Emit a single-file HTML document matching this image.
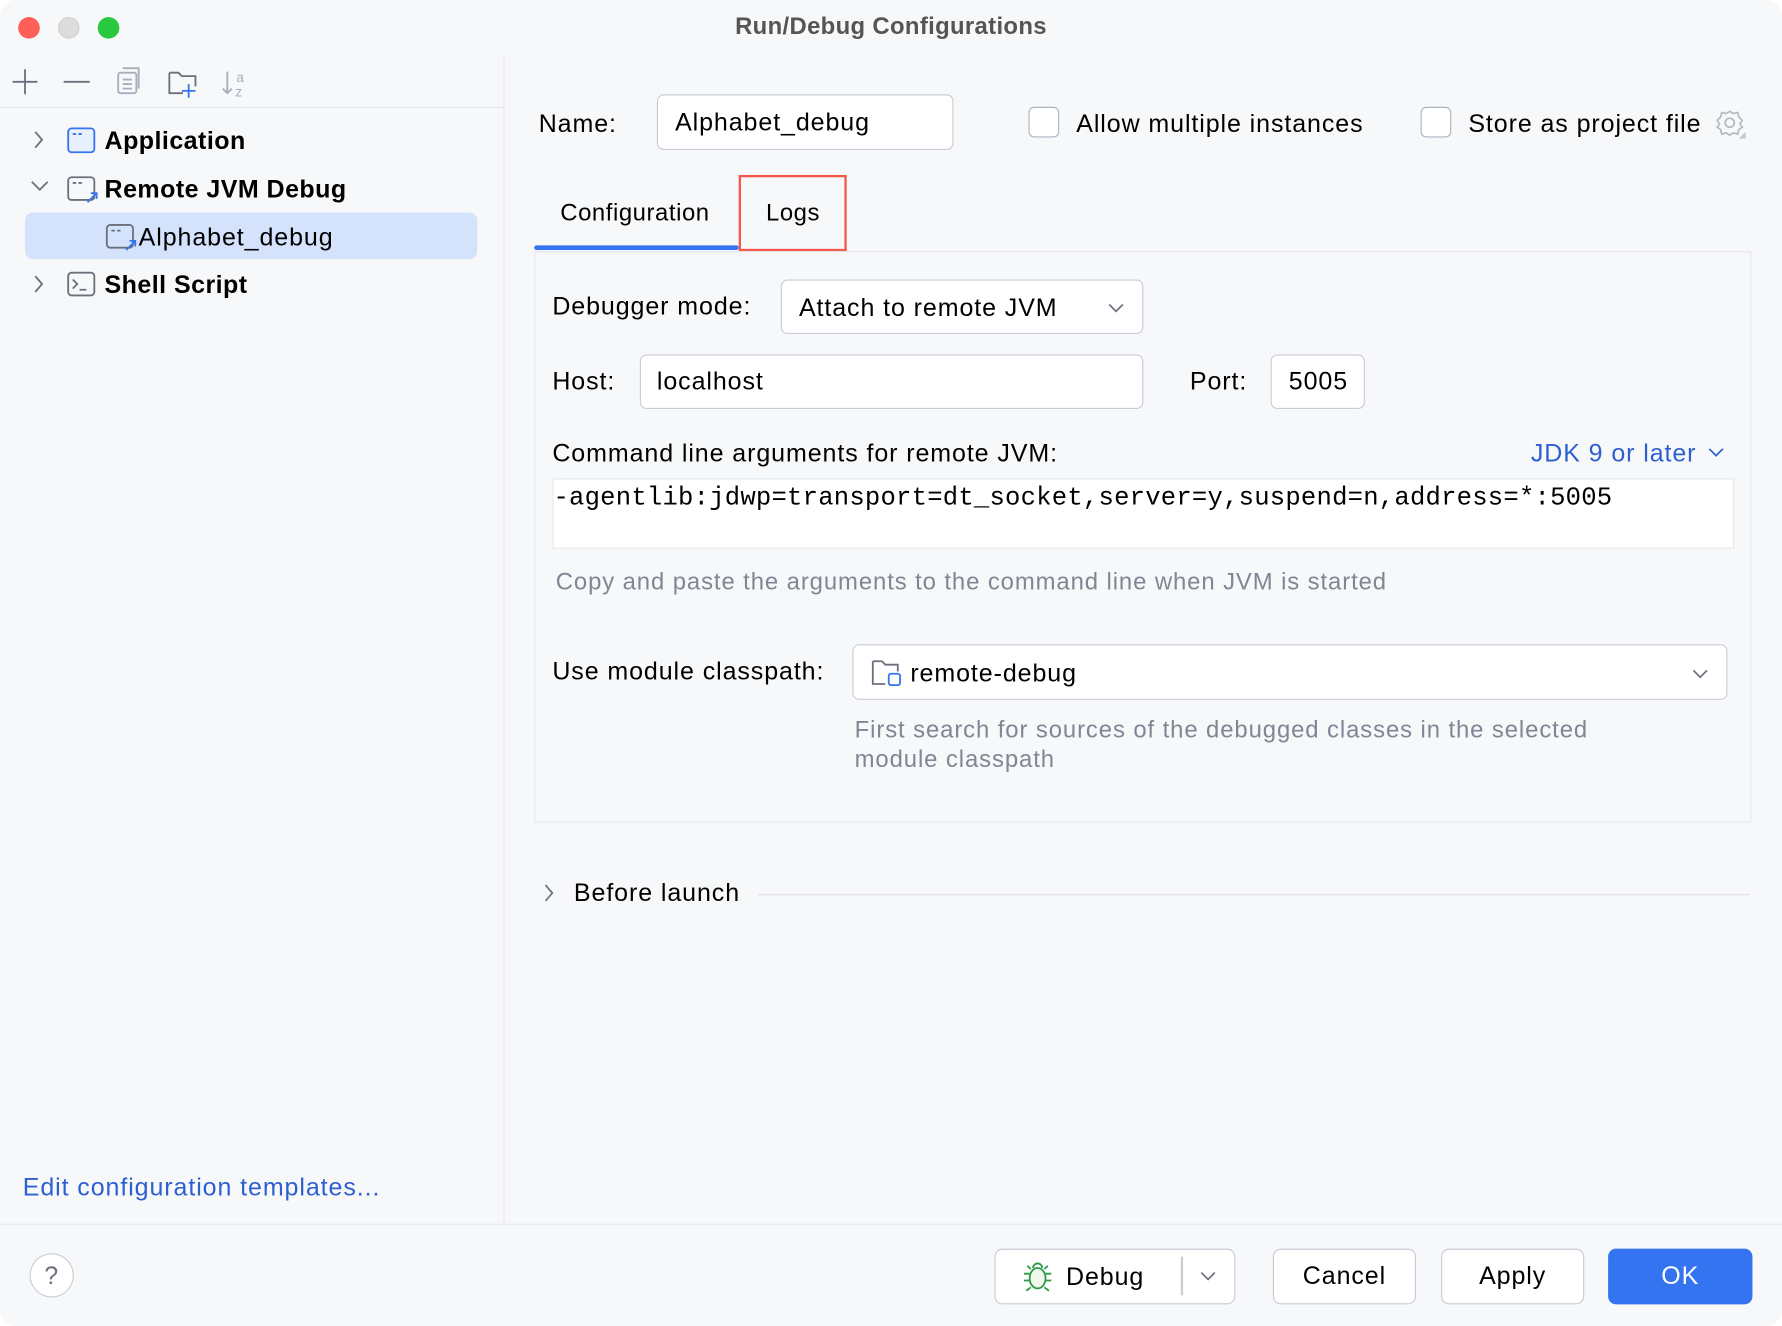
<!DOCTYPE html>
<html><head><meta charset="utf-8"><style>
html,body{margin:0;padding:0;width:1782px;height:1326px;overflow:hidden;background:#fff}
#w{position:absolute;left:0;top:0;width:1568px;height:1167px;transform:scale(1.13648,1.1362);transform-origin:0 0;background:#f7f8fa;font-family:"Liberation Sans",sans-serif;color:#000;font-size:22px;border-radius:14px;overflow:hidden;letter-spacing:0.8px}
.a{position:absolute;white-space:nowrap}
.box{position:absolute;background:#fff;border:1.5px solid #c9ccd6;border-radius:6px;box-sizing:border-box}
.t{line-height:1}
.btn{position:absolute;background:#fff;border:1.5px solid #c9ccd6;border-radius:7px;box-sizing:border-box;text-align:center;line-height:46px}
.cb{position:absolute;width:27px;height:27px;border:1.5px solid #aeb3c2;border-radius:5px;background:#fff;box-sizing:border-box}
.gray{color:#818594}
.b{font-weight:bold;letter-spacing:0.4px}
</style></head><body><div id="w">
<div class="a" style="left:15.5px;top:14.5px;width:19px;height:19px;border-radius:50%;background:#fe5f57"></div>
<div class="a" style="left:50.5px;top:14.5px;width:19px;height:19px;border-radius:50%;background:#dcdcdc;border:1px solid #d0d0d0;box-sizing:border-box"></div>
<div class="a" style="left:85.5px;top:14.5px;width:19px;height:19px;border-radius:50%;background:#28c840"></div>
<div class="a t" style="left:0;width:1568px;text-align:center;top:13px;font-size:21px;font-weight:bold;color:#555;letter-spacing:0.3px">Run/Debug Configurations</div>

<div class="a" style="left:443px;top:50px;width:1px;height:1027px;background:#e6e7eb"></div>
<div class="a" style="left:0;top:94px;width:443px;height:1px;background:#e6e7eb"></div>
<svg class="a" style="left:0;top:55px" width="240" height="36" viewBox="0 0 240 36">
<g stroke="#6c707e" stroke-width="1.6" fill="none">
<path d="M22 6v22M11 17h22"/><path d="M56 17h23"/>
<g stroke="#a8adbd"><rect x="104" y="9" width="16" height="18" rx="2"/><path d="M108 15h8M108 19h8M108 23h8M108 5h14v18"/></g>
<path d="M149 9h8l3 3h12v9M149 9v18h12"/><path d="M166 19v12M160 25h12" stroke="#3574f0"/>
<g stroke="#a8adbd"><path d="M200 8v19M196 23l4 4 4-4"/></g>
</g>
<text x="208" y="17" font-size="12" fill="#a8adbd" font-family="Liberation Sans">a</text>
<text x="207" y="30" font-size="12" fill="#a8adbd" font-family="Liberation Sans">z</text>
</svg>
<div class="a" style="left:22px;top:187px;width:398px;height:41px;background:#d4e2fc;border-radius:7px"></div>
<svg class="a" style="left:0;top:100px" width="130" height="170" viewBox="0 0 130 170">
<g fill="none" stroke-width="1.6">
<path d="M31 16l6 7-6 7" stroke="#6c707e"/>
<path d="M28 60l7 7 7-7" stroke="#6c707e"/>
<path d="M31 143l6 7-6 7" stroke="#6c707e"/>
<rect x="60" y="13" width="23" height="21" rx="3" stroke="#3574f0" fill="#e8effd"/>
<path d="M64 18h3M69 18h3" stroke="#3574f0"/>
<rect x="60" y="56" width="23" height="20" rx="3" stroke="#6c707e"/><path d="M64 61h3M69 61h3" stroke="#6c707e"/>
<path d="M77 78l8-8M80 70h5v5" stroke="#3574f0"/>
<rect x="94" y="98" width="23" height="20" rx="3" stroke="#6c707e"/><path d="M98 103h3M103 103h3" stroke="#6c707e"/>
<path d="M111 120l8-8M114 112h5v5" stroke="#3574f0"/>
<rect x="60" y="140" width="23" height="20" rx="3" stroke="#6c707e"/><path d="M64 146l4 4-4 4M70 155h6" stroke="#6c707e"/>
</g></svg>
<div class="a t b" style="left:92px;top:113px">Application</div>
<div class="a t b" style="left:92px;top:156px">Remote JVM Debug</div>
<div class="a t" style="left:122px;top:198px">Alphabet_debug</div>
<div class="a t b" style="left:92px;top:240px">Shell Script</div>
<div class="a t" style="left:20px;top:1034px;color:#2e5fcf">Edit configuration templates...</div>

<div class="a" style="left:0;top:1077px;width:1568px;height:1px;background:#e6e7eb"></div>
<div class="a" style="left:26px;top:1103px;width:37px;height:37px;border:1.5px solid #c9ccd6;border-radius:50%;background:#fff;text-align:center;line-height:37px;color:#6c707e;font-size:22px">?</div>
<div class="btn" style="left:875px;top:1099px;width:212px;height:49px"></div>
<svg class="a" style="left:896px;top:1108px" width="36" height="30" viewBox="0 0 36 30"><g fill="#f0f8ee" stroke="#2e9a47" stroke-width="1.6"><ellipse cx="17" cy="17" rx="7" ry="9"/><path d="M13 8a4 4 0 018 0M10 13H5M10 19H5M24 13h5M24 19h5M11 25l-4 3M23 25l4 3M11 9L8 6M23 9l3-3" fill="none"/></g></svg>
<div class="a t" style="left:938px;top:1113px">Debug</div>
<div class="a" style="left:1039px;top:1106px;width:1.5px;height:34px;background:#c9ccd6"></div>
<svg class="a" style="left:1055px;top:1117px" width="16" height="12"><path d="M2 3l6 6 6-6" fill="none" stroke="#6c707e" stroke-width="1.5"/></svg>
<div class="btn" style="left:1120px;top:1099px;width:126px;height:49px">Cancel</div>
<div class="btn" style="left:1268px;top:1099px;width:126px;height:49px">Apply</div>
<div class="btn" style="left:1415px;top:1099px;width:127px;height:49px;background:#3574f0;border-color:#3574f0;color:#fff">OK</div>

<div class="a t" style="left:474px;top:98px">Name:</div>
<div class="box" style="left:578px;top:83px;width:261px;height:49px"></div>
<div class="a t" style="left:594px;top:97px">Alphabet_debug</div>
<div class="cb" style="left:905px;top:94px"></div>
<div class="a t" style="left:947px;top:98px">Allow multiple instances</div>
<div class="cb" style="left:1250px;top:94px"></div>
<div class="a t" style="left:1292px;top:98px">Store as project file</div>
<svg class="a" style="left:1508px;top:94px" width="30" height="30" viewBox="0 0 30 30"><g fill="none" stroke="#b4b8c4" stroke-width="1.5"><circle cx="14" cy="14" r="4"/><path d="M14 4l3 2 4-1 1 4 3 3-2 3 2 3-3 2-1 4-4-1-3 2-3-2-4 1-1-4-3-2 2-3-2-3 3-3 1-4 4 1z"/></g><path d="M28 22v6h-6z" fill="#c4c7d0"/></svg>

<div class="a t" style="left:493px;top:177px;font-size:21px;letter-spacing:0.5px">Configuration</div>
<div class="a t" style="left:674px;top:177px;font-size:21px;letter-spacing:0.5px">Logs</div>
<div class="a" style="left:470px;top:216px;width:180px;height:4px;background:#3574f0;border-radius:2px"></div>
<div class="a" style="left:650px;top:154px;width:95px;height:67px;border:2px solid #f5574a;box-sizing:border-box"></div>

<div class="a" style="left:470px;top:221px;width:1071px;height:503px;border:1.5px solid #e6e7eb;box-sizing:border-box"></div>
<div class="a t" style="left:486px;top:259px">Debugger mode:</div>
<div class="box" style="left:687px;top:246px;width:319px;height:48px"></div>
<div class="a t" style="left:703px;top:260px">Attach to remote JVM</div>
<svg class="a" style="left:974px;top:265px" width="16" height="12"><path d="M2 3l6 6 6-6" fill="none" stroke="#6c707e" stroke-width="1.5"/></svg>
<div class="a t" style="left:486px;top:325px">Host:</div>
<div class="box" style="left:563px;top:312px;width:443px;height:48px"></div>
<div class="a t" style="left:578px;top:325px">localhost</div>
<div class="a t" style="left:1047px;top:325px">Port:</div>
<div class="box" style="left:1118px;top:312px;width:83px;height:48px"></div>
<div class="a t" style="left:1134px;top:325px">5005</div>
<div class="a t" style="left:486px;top:388px">Command line arguments for remote JVM:</div>
<div class="a t" style="left:1347px;top:388px;color:#2e5fcf">JDK 9 or later</div>
<svg class="a" style="left:1502px;top:392px" width="16" height="12"><path d="M2 3l6 6 6-6" fill="none" stroke="#2e5fcf" stroke-width="1.5"/></svg>
<div class="a" style="left:486px;top:421px;width:1040px;height:62px;background:#fff;border:1px solid #e6e7eb;box-sizing:border-box"></div>
<div class="a t" style="left:487px;top:427px;font-family:'Liberation Mono',monospace;font-size:22.5px;letter-spacing:0.2px">-agentlib:jdwp=transport=dt_socket,server=y,suspend=n,address=*:5005</div>
<div class="a t gray" style="left:489px;top:502px;font-size:21px;letter-spacing:0.8px">Copy and paste the arguments to the command line when JVM is started</div>
<div class="a t" style="left:486px;top:580px">Use module classpath:</div>
<div class="box" style="left:750px;top:567px;width:770px;height:49px"></div>
<svg class="a" style="left:765px;top:578px" width="32" height="30" viewBox="0 0 32 30"><g fill="none" stroke-width="1.6"><path d="M3 4h8l3 3h11v6M3 4v20h11" stroke="#6c707e"/><rect x="17" y="15" width="10" height="10" rx="2" stroke="#3574f0"/></g></svg>
<div class="a t" style="left:801px;top:582px">remote-debug</div>
<svg class="a" style="left:1488px;top:587px" width="16" height="12"><path d="M2 3l6 6 6-6" fill="none" stroke="#6c707e" stroke-width="1.5"/></svg>
<div class="a gray" style="left:752px;top:630px;font-size:21px;line-height:26px;letter-spacing:0.8px">First search for sources of the debugged classes in the selected<br>module classpath</div>

<svg class="a" style="left:476px;top:777px" width="14" height="18"><path d="M4 2l6 7-6 7" fill="none" stroke="#6c707e" stroke-width="1.5"/></svg>
<div class="a t" style="left:505px;top:775px">Before launch</div>
<div class="a" style="left:667px;top:787px;width:873px;height:1px;background:#e0e1e6"></div>
</div></body></html>
